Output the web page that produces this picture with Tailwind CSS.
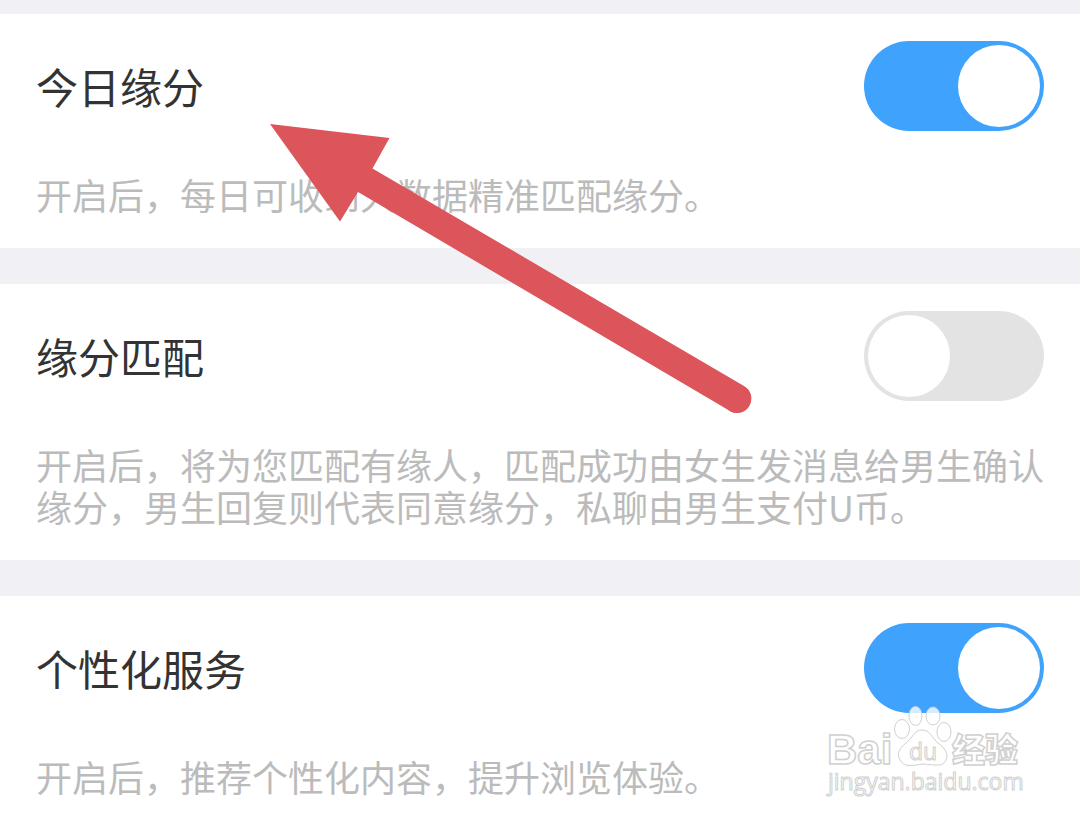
<!DOCTYPE html>
<html lang="zh-CN">
<head>
    <meta charset="UTF-8">
    <meta name="viewport" content="width=device-width, initial-scale=1.0">
    <title>缘分设置</title>
    <script src="https://cdn.jsdelivr.net/npm/@tailwindcss/browser@4"></script>
</head>
<body class="bg-[#f0f0f5] font-['Noto_Sans_CJK_SC',sans-serif]">
    <!-- Settings -->
    <main class="relative flex min-h-screen flex-col gap-9 overflow-hidden pt-[14px]">
        <section class="bg-white px-9 pt-[27px] pb-[33px]">
            <div class="flex items-center justify-between">
                <label for="today" class="text-[42px] leading-[90px] text-[#333]">今日缘分</label>
                <input id="today" type="checkbox" checked class="h-[90px] w-[180px] shrink-0 cursor-pointer appearance-none rounded-full bg-[#e3e3e3] p-1 before:block before:size-[82px] before:rounded-full before:bg-white checked:bg-[#3fa2fc] checked:before:ml-[90px]">
            </div>
            <p class="mt-[42px] text-4xl leading-[42px] text-[#bbb]">开启后，每日可收到大数据精准匹配缘分。</p>
        </section>

        <section class="bg-white px-9 pt-[27px] pb-[33px]">
            <div class="flex items-center justify-between">
                <label for="match" class="text-[42px] leading-[90px] text-[#333]">缘分匹配</label>
                <input id="match" type="checkbox" class="h-[90px] w-[180px] shrink-0 cursor-pointer appearance-none rounded-full bg-[#e3e3e3] p-1 before:block before:size-[82px] before:rounded-full before:bg-white checked:bg-[#3fa2fc] checked:before:ml-[90px]">
            </div>
            <p class="mt-[42px] text-4xl leading-[42px] text-[#bbb]">开启后，将为您匹配有缘人，匹配成功由女生发消息给男生确认缘分，男生回复则代表同意缘分，私聊由男生支付U币。</p>
        </section>

        <section class="grow bg-white px-9 pt-[27px]">
            <div class="flex items-center justify-between">
                <label for="personal" class="text-[42px] leading-[90px] text-[#333]">个性化服务</label>
                <input id="personal" type="checkbox" checked class="h-[90px] w-[180px] shrink-0 cursor-pointer appearance-none rounded-full bg-[#e3e3e3] p-1 before:block before:size-[82px] before:rounded-full before:bg-white checked:bg-[#3fa2fc] checked:before:ml-[90px]">
            </div>
            <p class="mt-[42px] text-4xl leading-[42px] text-[#bbb]">开启后，推荐个性化内容，提升浏览体验。</p>
        </section>

        <!-- Pointer arrow -->
        <svg class="pointer-events-none absolute top-[120px] left-[266px] h-[300px] w-[490px]" viewBox="266 120 490 300" fill="#dc555b" aria-hidden="true">
            <path d="M270 124 L389.500 138 L372.500 168.500 L744 386 A14 14 0 0 1 730 411 L358 192 L340 221.500 Z"/>
            <circle cx="737" cy="399" r="14"/>
        </svg>

        <!-- Watermark -->
        <svg class="pointer-events-none absolute right-[50px] bottom-5 h-[100px] w-[210px]" viewBox="820 700 210 100" fill="#fff" fill-opacity=".8" stroke="#d0d0d0" stroke-width="1" role="img" aria-label="Baidu 经验">
            <text x="827" y="764" font-family="Liberation Sans, sans-serif" font-size="42" font-weight="700" stroke-width="1.500">Bai</text>
            <ellipse cx="902" cy="729" rx="7.500" ry="9.500"/>
            <ellipse cx="915.500" cy="716" rx="6.500" ry="9.500"/>
            <ellipse cx="933" cy="716" rx="7" ry="9"/>
            <ellipse cx="944" cy="732" rx="7" ry="9.500"/>
            <path d="M922 730 C930 730 932 738 938 743 C945 748 949 754 946 760 C943 767 936 765 923 764 C910 766 904 767 900 760 C896 753 900 748 906 743 C913 738 914 730 922 730 Z"/>
            <text x="909" y="760" font-family="Open Sans, sans-serif" font-size="23" font-weight="400">du</text>
            <text x="952" y="762" font-family="Noto Sans CJK SC, sans-serif" font-size="33" font-weight="900" stroke-width="1.500">经验</text>
            <text x="828" y="790" font-family="Open Sans, sans-serif" font-size="23">jingyan.baidu.com</text>
        </svg>
    </main>
</body>
</html>
